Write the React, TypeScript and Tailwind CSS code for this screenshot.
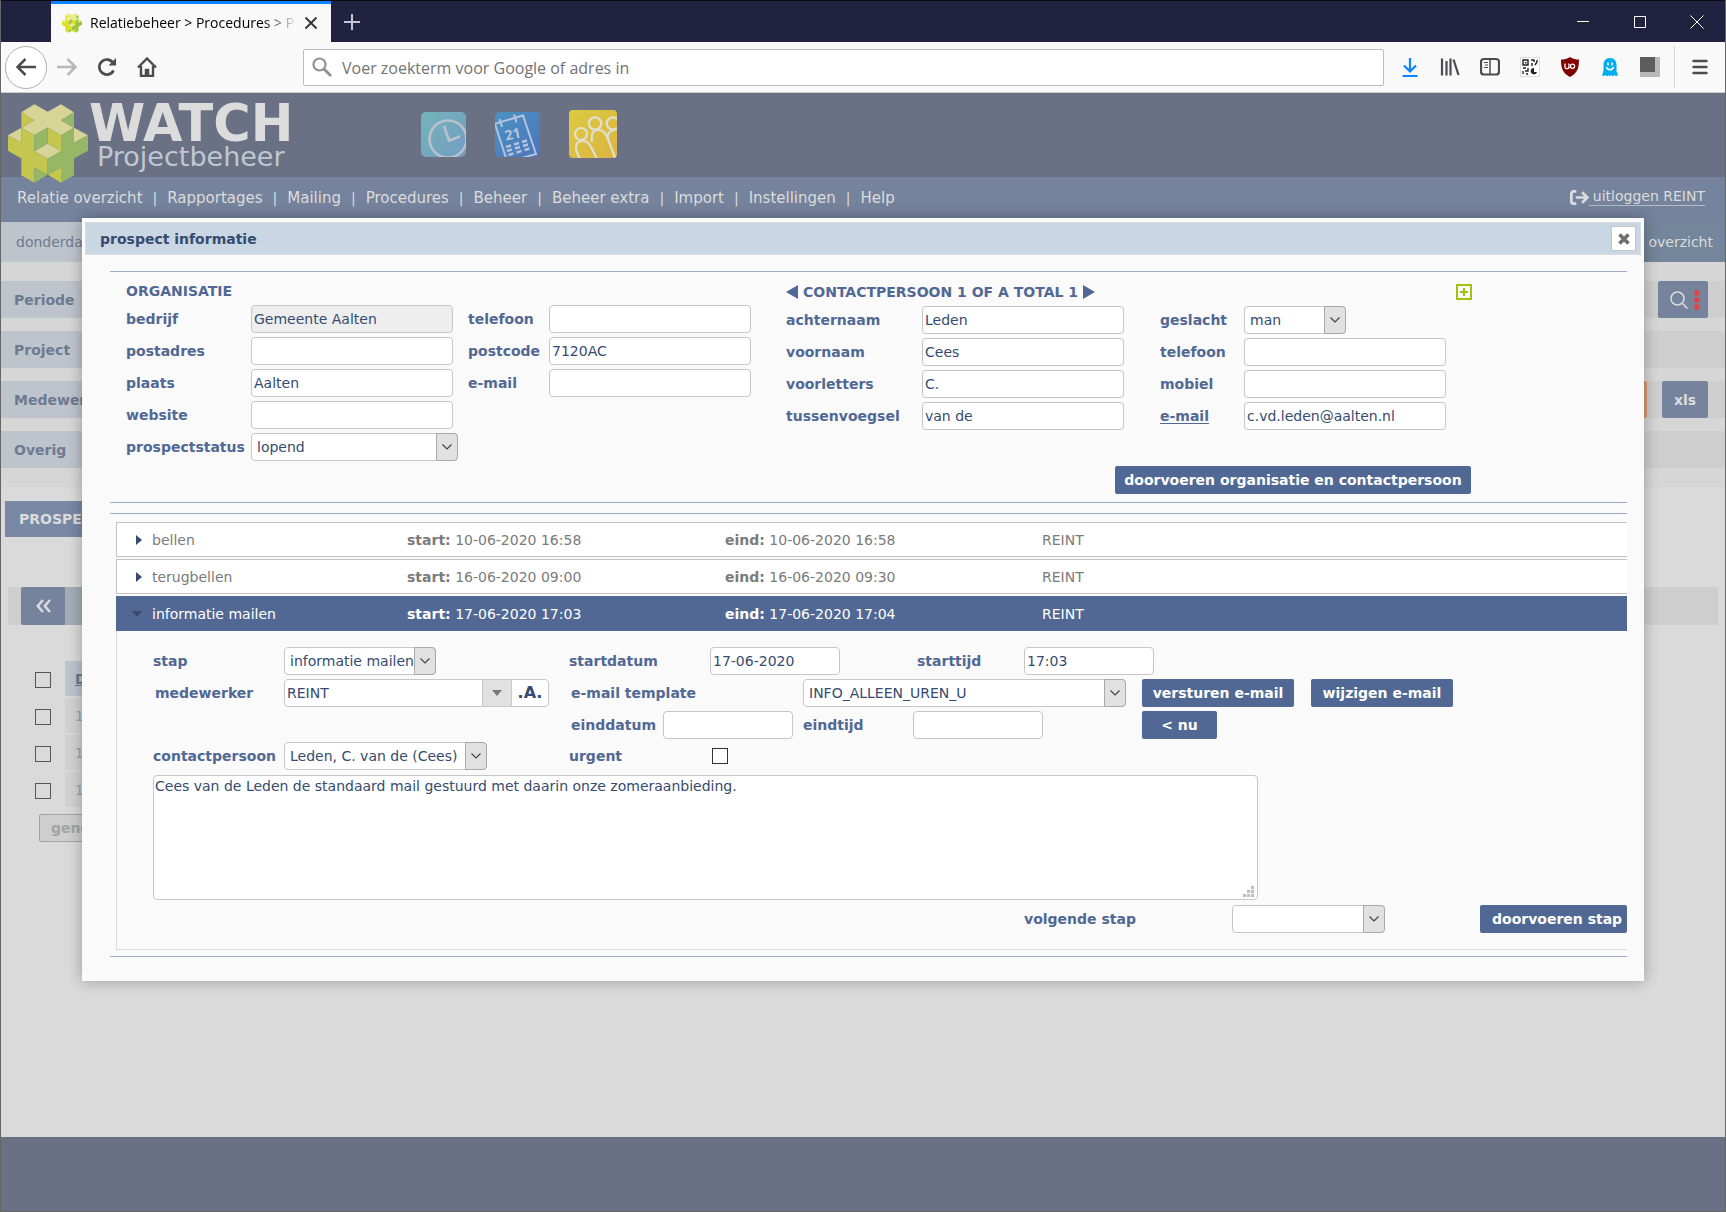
import React from 'react';
import clsx from 'clsx';

const LABEL = 'shrink-0 font-bold text-[#516894] whitespace-nowrap';
const FIELD = 'h-7 shrink-0 rounded border border-[#c6c6c6] text-[#364b6f] outline-none';
const BUTTON = 'h-7 shrink-0 rounded-xs bg-[#516894] font-bold text-white whitespace-nowrap';

const menu = ['Relatie overzicht', 'Rapportages', 'Mailing', 'Procedures', 'Beheer', 'Beheer extra', 'Import', 'Instellingen', 'Help'];
const filters = ['Periode', 'Project', 'Medewerker', 'Overig'];

interface FieldProps {
  id: string;
  label: string;
  labelWidth: string;
  value?: string;
  width?: string;
  readOnly?: boolean;
  link?: boolean;
}

const TextField = ({ id, label, labelWidth, value = '', width = 'w-[202px]', readOnly, link }: FieldProps) => (
  <div className="flex items-center">
    <label htmlFor={id} className={clsx(LABEL, labelWidth)}>
      {link ? <a href="#mail" className="underline decoration-1 underline-offset-2">{label}</a> : label}
    </label>
    <input id={id} type="text" defaultValue={value} readOnly={readOnly} className={clsx(FIELD, width, 'px-0.5', readOnly ? 'bg-[#eeeeee]' : 'bg-white')} />
  </div>
);

interface SelectProps {
  id: string;
  label?: string;
  labelWidth?: string;
  value: string;
  width: string;
}

const SelectField = ({ id, label, labelWidth, value, width }: SelectProps) => (
  <div className="flex items-center">
    {label && <label htmlFor={id} className={clsx(LABEL, labelWidth)}>{label}</label>}
    <div className={clsx('relative shrink-0', width)}>
      <select id={id} className={clsx(FIELD, 'w-full appearance-none bg-white pl-[5px]')}>
        <option>{value}</option>
      </select>
      <span className="pointer-events-none absolute inset-y-0 right-0 flex w-[22px] items-center justify-center rounded-r border border-[#a9a9a9] bg-[#e1e1e1]">
        <svg width="10" height="6" viewBox="0 0 10 6" fill="none" stroke="#444" strokeWidth="1.2"><path d="M.5.5 5 5 9.500.5" /></svg>
      </span>
    </div>
  </div>
);

const CubeLogo = ({ className, bright }: { className: string; bright?: boolean }) => {
  const [top, left, right] = bright ? ['#eeea8c', '#dce01f', '#9ac53a'] : ['#d6d497', '#c4c650', '#96b766'];
  return (
    <svg className={className} viewBox="24 42 240 236">
      <path fill={top} d="M64 66 103 42l40 23 40-23 39 24-39 24 39 23-39 22-40-23-40 23-39-22 39-23zM24 135l40-22v45zM264 135l-42-22v45zM103 183l40-23 40 23-40 23z" />
      <path fill={left} d="M64 66l39 24-39 23zM24 135l40 23v-45l39 22v48l40 23v48l-40-22v46l-39-23v-50l-40-23zM143 112l40 23v48l-40-23zM183 232l-40 22 40 24z" />
      <path fill={right} d="M222 66l-39 24 39 23zM264 135l-42 23v-45l-39 22v48l-40 23v48l40-22v46l39-23v-50l42-23zM143 112l-40 23v48l40-23zM103 232l40 22-40 24z" />
    </svg>
  );
};

const TitleBar = () => (
  <div className="flex h-[42px] items-stretch border-t border-[#0b0b14] bg-[#20223f]">
    <div className="ml-[50px] flex w-[280px] items-center border-t-[3px] border-[#0a84ff] bg-[#f9f9f9] pl-[11px]">
      <CubeLogo className="mr-2 h-5 w-5 shrink-0" bright />
      <span className="w-[208px] overflow-hidden bg-gradient-to-r from-black from-80% to-[#f9f9f9] to-100% bg-clip-text font-['Open_Sans',sans-serif] text-[14px] whitespace-nowrap text-transparent">
        Relatiebeheer &gt; Procedures &gt; P
      </span>
      <button aria-label="Tabblad sluiten" className="mr-3 ml-1.5 shrink-0">
        <svg width="14" height="14" viewBox="0 0 14 14" stroke="#333" strokeWidth="1.8"><path d="M1.500 1.500l11 11M12.500 1.500l-11 11" /></svg>
      </button>
    </div>
    <button aria-label="Nieuw tabblad" className="ml-3">
      <svg width="18" height="18" viewBox="0 0 18 18" stroke="#c6c7d2" strokeWidth="2"><path d="M9 1v16M1 9h16" /></svg>
    </button>
    <div className="ml-auto flex">
      <button aria-label="Minimaliseren" className="flex w-[57px] items-center justify-center">
        <svg width="12" height="12" viewBox="0 0 12 12" stroke="#fff"><path d="M0 5.500h12" /></svg>
      </button>
      <button aria-label="Maximaliseren" className="flex w-[57px] items-center justify-center">
        <svg width="12" height="12" viewBox="0 0 12 12" stroke="#fff" fill="none"><path d="M.5.5h11v11H.5z" /></svg>
      </button>
      <button aria-label="Sluiten" className="flex w-[57px] items-center justify-center">
        <svg width="14" height="14" viewBox="0 0 14 14" stroke="#fff"><path d="M.5.5l13 13M13.500.5l-13 13" /></svg>
      </button>
    </div>
  </div>
);

const toolbarIcons = [
  {
    name: 'Downloads',
    art: <path d="M10 1v13M4 8.500l6 6 6-6M2.500 19h15" fill="none" stroke="#0a84ff" strokeWidth="2.200" />,
  },
  {
    name: 'Bibliotheek',
    art: <path d="M2 1.500v17M6.500 4v14.500M10.500 1.500v17M13.500 2.500l5 15.500" fill="none" stroke="#4c4c4f" strokeWidth="2.200" />,
  },
  {
    name: 'Zijbalk',
    art: (
      <g fill="none" stroke="#4c4c4f">
        <rect x="1" y="2" width="18" height="15.500" rx="3" strokeWidth="2.200" />
        <path d="M10 2v16" strokeWidth="1.500" />
        <path d="M4 5.500h4M5 8h3M4 10.500h4" />
      </g>
    ),
  },
  {
    name: 'QR-code',
    art: (
      <g>
        <rect x=".5" y=".5" width="19" height="19" fill="#fff" stroke="#ddd" />
        <path d="M3 3h5v5H3zM11 3h3v2M17 3v2l-2 3M12 6v3M3 11h3M8 11v3H5M3 14v3M6 17h2" fill="none" stroke="#222" strokeWidth="1.400" />
        <path d="M5 5h1.500v1.500H5zM14 11a3.200 3.200 0 1 0 3 4h-3z" fill="#222" />
      </g>
    ),
  },
  {
    name: 'uBlock Origin',
    art: (
      <g>
        <path d="M10 0c3 2 6 2.500 9 2.500C19 12 17 16 10 20 3 16 1 12 1 2.500 4 2.500 7 2 10 0z" fill="#800000" />
        <path d="M5 6.500v3.200a1.900 1.900 0 0 0 4 0V6.500v4.700" fill="none" stroke="#fff" strokeWidth="1.300" />
        <circle cx="12.500" cy="9.200" r="2.100" fill="none" stroke="#fff" strokeWidth="1.300" />
      </g>
    ),
  },
  {
    name: 'Ghostery',
    art: (
      <g>
        <path d="M10 1C5.500 1 3.500 4 3.500 8v6L2 18.500c1.500.5 2.500.5 3.500-.5 1 1.500 2.500 1.500 3.300 0 .8 1.500 1.700 1.500 2.500 0 .8 1.500 2.300 1.500 3.200 0 1 1 2 1 3.500.5L16.500 14V8c0-4-2-7-6.500-7z" fill="#00aef0" />
        <path d="M8 5.500v3M12 5.500v3M6.500 10c1 3.500 6 3.500 7 0" fill="none" stroke="#fff" strokeWidth="1.500" />
      </g>
    ),
  },
  {
    name: 'Extensie',
    art: (
      <g>
        <path d="M0 0h20v20H0z" fill="#b9b9b9" />
        <path d="M0 0h15v15H0z" fill="#5d5d5d" />
      </g>
    ),
  },
];

const Toolbar = () => (
  <div className="flex h-[51px] items-center border-b border-[#cccccc] bg-[#f9f9f9] pl-1">
    <button aria-label="Terug" className="flex h-[43px] w-[42px] items-center justify-center rounded-full border border-[#b1b1b1] bg-white">
      <svg width="20" height="18" viewBox="0 0 20 18" fill="none" stroke="#4c4c4f" strokeWidth="2.500"><path d="M20 9H2M9.500 1 1.500 9l8 8" /></svg>
    </button>
    <button aria-label="Vooruit" className="flex w-10 justify-center">
      <svg width="20" height="18" viewBox="0 0 20 18" fill="none" stroke="#b8b8b8" strokeWidth="2.500"><path d="M0 9h18M10.500 1l8 8-8 8" /></svg>
    </button>
    <button aria-label="Vernieuwen" className="flex w-10 justify-center">
      <svg width="20" height="20" viewBox="0 0 20 20" fill="none" stroke="#4c4c4f" strokeWidth="2.700"><path d="M16.500 13.500a7.500 7.500 0 1 1-.3-7.500" /><path d="M19 1v7.500h-7.500z" fill="#4c4c4f" stroke="none" /></svg>
    </button>
    <button aria-label="Startpagina" className="flex w-10 justify-center">
      <svg width="20" height="20" viewBox="0 0 20 20" fill="none" stroke="#4c4c4f" strokeWidth="2.400"><path d="M1 10.500 10 1.500l9 9" /><path d="M4 9v10h12V9" /><path d="M8.500 18v-5.500h3V18z" fill="#4c4c4f" strokeWidth="1.500" /></svg>
    </button>
    <div className="ml-[136px] flex h-[37px] flex-1 items-center rounded-xs border border-[#bcbcbc] bg-white pl-2">
      <svg width="20" height="20" viewBox="0 0 20 20" fill="none" stroke="#909090"><circle cx="7.500" cy="7.500" r="6" strokeWidth="2.200" /><path d="M12 12l7 7" strokeWidth="2.800" /></svg>
      <input aria-label="Zoeken" type="text" placeholder="Voer zoekterm voor Google of adres in" className="ml-2.5 flex-1 pt-0.5 font-['Open_Sans',sans-serif] text-[16px] outline-none placeholder:text-[#737373]" />
    </div>
    <div className="ml-1.5 flex">
      {toolbarIcons.map((icon) => (
        <button key={icon.name} aria-label={icon.name} className="flex w-10 justify-center">
          <svg width="20" height="20" viewBox="0 0 20 20">{icon.art}</svg>
        </button>
      ))}
    </div>
    <div className="ml-1 flex h-[42px] w-[51px] items-center justify-center border-l border-[#d6d6d6]">
      <button aria-label="Menu">
        <svg width="16" height="16" viewBox="0 0 16 16" stroke="#4c4c4f" strokeWidth="2.400" strokeLinecap="round"><path d="M1.500 2h13M1.500 8h13M1.500 14h13" /></svg>
      </button>
    </div>
  </div>
);

const AppIcons = () => (
  <div className="ml-[132px] flex items-center gap-[29px] pt-[17px]">
    <a href="#uren" aria-label="Uren">
      <svg width="45" height="45" viewBox="0 0 45 45">
        <defs>
          <linearGradient id="teal" x1="0" y1="0" x2="1" y2="1"><stop offset="0" stopColor="#74b3b8" /><stop offset="1" stopColor="#739dc4" /></linearGradient>
          <clipPath id="tile"><rect width="45" height="45" rx="5" /></clipPath>
        </defs>
        <g clipPath="url(#tile)">
          <rect width="45" height="45" fill="url(#teal)" />
          <circle cx="27" cy="27" r="18.500" fill="none" stroke="#b9c1cd" strokeWidth="2.600" />
          <path d="M23 14l5 14.500 11-4" fill="none" stroke="#b9c1cd" strokeWidth="2.600" />
        </g>
      </svg>
    </a>
    <a href="#planning" aria-label="Planning">
      <svg width="45" height="45" viewBox="0 0 45 45">
        <defs><linearGradient id="blue" x1="0" y1="0" x2="1" y2="1"><stop offset="0" stopColor="#4b93c0" /><stop offset="1" stopColor="#4d74bd" /></linearGradient></defs>
        <g clipPath="url(#tile)">
          <rect width="45" height="45" fill="url(#blue)" />
          <g fill="none" stroke="#b4c3dc" strokeWidth="2">
            <path d="M-1 12 28 3.500 41 42l-29 8M0 12l11 34M4.500 7l2.500 8M19 2.500l2.500 8" />
            <path d="M11 35l5-1.500M12 39l5-1.500M13.500 43l5-1.500M19 32.500l5-1.500M20 36.500l5-1.500M21.500 40.500l5-1.500M27 30l5-1.500M28 34l5-1.500M29.500 38l5-1.500" strokeWidth="2.400" />
          </g>
          <text x="11" y="29" transform="rotate(-13 10 29)" fill="#b4c3dc" fontSize="14" fontWeight="bold" fontFamily="Open Sans, sans-serif">21</text>
        </g>
      </svg>
    </a>
    <a href="#relaties" aria-label="Relaties">
      <svg width="48" height="48" viewBox="0 0 48 48">
        <defs>
          <linearGradient id="gold" x1="0" y1="0" x2="1" y2="1"><stop offset="0" stopColor="#dccb40" /><stop offset="1" stopColor="#dcb442" /></linearGradient>
          <clipPath id="bigTile"><rect width="48" height="48" rx="4" /></clipPath>
        </defs>
        <g clipPath="url(#bigTile)">
          <rect width="48" height="48" fill="url(#gold)" />
          <g fill="none" stroke="#e1dfd4" strokeWidth="2.200">
            <circle cx="12" cy="24" r="6" />
            <circle cx="26" cy="13.500" r="6.200" />
            <circle cx="44" cy="13.500" r="6.200" />
            <path d="M11 49C4 36 7 31 14 31c5 0 7 3 9 8l5 10M23 32c-1-8 1-12 6-12 5 0 7 2 10 9l8 21M39 29c-1-5 1-8 6-9" />
          </g>
        </g>
      </svg>
    </a>
  </div>
);

// Everything behind the dialog, in its dimmed colours
const PageHeader = () => (
  <header className="text-[#dcdcdc]">
    <div className="flex h-[84px] items-start bg-[#6a7185] pl-[7px]">
      <CubeLogo className="relative z-10 mt-[11px] h-[79px] w-20 shrink-0" />
      <div className="ml-px w-[200px] pt-2">
        <div className="text-[51px] leading-[46px] font-bold">WATCH</div>
        <div className="pl-2 text-[27px] leading-[20px] text-[#bfc8d1]">Projectbeheer</div>
      </div>
      <AppIcons />
    </div>
    <nav className="flex h-[45px] items-start justify-between bg-[#75839d] pt-[11px] pr-5 pl-4">
      <ul className="flex text-[15px]">
        {menu.map((item, idx) => (
          <li key={item} className="whitespace-nowrap">
            {idx > 0 && <span className="mx-2.5 text-[14px]">|</span>}
            <a href="#menu">{item}</a>
          </li>
        ))}
      </ul>
      <a href="#uitloggen" className="flex items-center">
        <svg width="19" height="15" viewBox="0 0 18 14" fill="none" stroke="#dcdcdc" strokeWidth="2.600"><path d="M6 1.300H3.300a2 2 0 0 0-2 2v7.400a2 2 0 0 0 2 2H6M5.500 7H16M11.500 2l5 5-5 5" /></svg>
        <span className="border-b border-[#b5bdca] pl-1 leading-[17px]">uitloggen REINT</span>
      </a>
    </nav>
  </header>
);

const PageBackground = () => (
  <main className="flex flex-1 flex-col bg-[#dadada] text-[#6d7a92]">
    <div className="flex h-10 items-center justify-between bg-[#bec4cc] pl-[15px]">
      <span>donderdag</span>
      <span className="flex h-10 w-[200px] items-center justify-end bg-[#74869b] pr-3 text-[#dcdcdc]">overzicht</span>
    </div>
    <div className="flex flex-col gap-[13px] bg-[#d6d6d6] py-[19px]">
      {filters.map((name) => (
        <div key={name} className="flex h-[37px] items-center justify-between bg-[#cecece] pr-[17px]">
          <span className="flex h-full w-[200px] items-center bg-[#bec4cc] pl-[13px] font-bold">{name}</span>
          {name === 'Periode' && (
            <button aria-label="Zoeken" className="flex h-full w-[50px] items-center justify-center gap-1.5 rounded-xs bg-[#75839d] pl-1">
              <svg width="18" height="18" viewBox="0 0 18 18" fill="none" stroke="#dcdcdc" strokeWidth="1.500"><circle cx="7.500" cy="7.500" r="6.500" /><path d="M12.500 12.500l5 5" /></svg>
              <svg width="6" height="20" viewBox="0 0 6 20" fill="#d9484c"><circle cx="3" cy="3" r="2.900" /><circle cx="3" cy="10" r="2.900" /><circle cx="3" cy="17" r="2.900" /></svg>
            </button>
          )}
          {name === 'Medewerker' && (
            <span className="flex h-full gap-[15px]">
              <button aria-label="Filter" className="w-[50px] rounded-xs bg-[#d99a70]" />
              <button className="w-[46px] rounded-xs bg-[#75839d] font-bold text-[#dcdcdc]">xls</button>
            </span>
          )}
        </div>
      ))}
    </div>
    <h2 className="mt-3.5 ml-1 flex h-9 w-[200px] items-center bg-[#7888a5] pl-3.5 font-bold text-[#dcdcdc]">PROSPECTS</h2>
    <div className="mx-[7px] mt-[50px] mb-9 flex h-[38px] bg-[#cecece] pl-[13px]">
      <button aria-label="Vorige" className="flex w-11 items-center justify-center rounded-l-xs bg-[#75839d]">
        <svg width="15" height="14" viewBox="0 0 15 14" fill="none" stroke="#dcdcdc" strokeWidth="2.500"><path d="M7 1 1.800 7 7 13M14 1 8.800 7 14 13" /></svg>
      </button>
      <span className="w-[100px] bg-[#a3acb7]" />
    </div>
    <table className="ml-[34px] w-[200px] table-fixed border-separate border-spacing-0 text-[#9aa3b3]">
      <tbody>
        {['Datum', '17-06', '16-06', '10-06'].map((cell, idx) => (
          <tr key={cell} className="h-[37px]">
            <td className="w-[30px] p-0">
              <input type="checkbox" aria-label={cell} className="block h-4 w-4 appearance-none border border-[#555]" />
            </td>
            <td className={clsx('border-b-2 border-[#dadada] py-0 pl-2.5', idx === 0 ? 'bg-[#bdc4ce] font-bold text-[#6d7a92] underline' : 'bg-[#d2d2d2]')}>{cell}</td>
          </tr>
        ))}
      </tbody>
    </table>
    <button className="mt-[5px] ml-[38px] h-7 w-[150px] rounded-xs border border-[#a3a3a3] bg-[#cecece] pl-[11px] text-left font-bold text-[#a3a3a3]">genereren</button>
  </main>
);

const OrganisatieForm = () => (
  <div className="flex h-[231px] items-start border-t border-[#9dadc4] pt-[11px] pl-4">
    <div className="w-[660px] shrink-0">
      <h3 className="mb-1.5 leading-4 font-bold text-[#516894]">ORGANISATIE</h3>
      <div className="flex">
        <div className="flex w-[342px] flex-col gap-1">
          <TextField id="bedrijf" label="bedrijf" labelWidth="w-[125px]" value="Gemeente Aalten" readOnly />
          <TextField id="postadres" label="postadres" labelWidth="w-[125px]" />
          <TextField id="plaats" label="plaats" labelWidth="w-[125px]" value="Aalten" />
          <TextField id="website" label="website" labelWidth="w-[125px]" />
          <SelectField id="status" label="prospectstatus" labelWidth="w-[125px]" value="lopend" width="w-[207px]" />
        </div>
        <div className="flex flex-col gap-1">
          <TextField id="tel" label="telefoon" labelWidth="w-[81px]" />
          <TextField id="postcode" label="postcode" labelWidth="w-[81px]" value="7120AC" />
          <TextField id="mail" label="e-mail" labelWidth="w-[81px]" />
        </div>
      </div>
    </div>
    <div className="w-[686px] shrink-0 pt-px">
      <div className="mb-1.5 flex h-4 items-center justify-between font-bold text-[#516894]">
        <div className="flex items-center gap-[5px]">
          <button aria-label="Vorige contactpersoon"><svg className="block" width="12" height="14" viewBox="0 0 12 14" fill="#516894"><path d="M12 0v14L0 7z" /></svg></button>
          <h3>CONTACTPERSOON 1 OF A TOTAL 1</h3>
          <button aria-label="Volgende contactpersoon"><svg className="block" width="12" height="14" viewBox="0 0 12 14" fill="#516894"><path d="M0 0v14l12-7z" /></svg></button>
        </div>
        <button aria-label="Contactpersoon toevoegen">
          <svg className="block" width="16" height="16" viewBox="0 0 16 16" fill="none" stroke="#a4c112" strokeWidth="2"><path d="M1 1h14v14H1zM8 4v8M4 8h8" /></svg>
        </button>
      </div>
      <div className="flex">
        <div className="flex w-[374px] flex-col gap-1">
          <TextField id="achternaam" label="achternaam" labelWidth="w-[136px]" value="Leden" />
          <TextField id="voornaam" label="voornaam" labelWidth="w-[136px]" value="Cees" />
          <TextField id="voorletters" label="voorletters" labelWidth="w-[136px]" value="C." />
          <TextField id="tussenvoegsel" label="tussenvoegsel" labelWidth="w-[136px]" value="van de" />
        </div>
        <div className="flex flex-col gap-1">
          <SelectField id="geslacht" label="geslacht" labelWidth="w-[84px]" value="man" width="w-[102px]" />
          <TextField id="cp-tel" label="telefoon" labelWidth="w-[84px]" />
          <TextField id="cp-mobiel" label="mobiel" labelWidth="w-[84px]" />
          <TextField id="cp-mail" label="e-mail" labelWidth="w-[84px]" value="c.vd.leden@aalten.nl" link />
        </div>
      </div>
      <div className="mt-9 flex justify-end pr-px">
        <button className={clsx(BUTTON, 'w-[356px]')}>doorvoeren organisatie en contactpersoon</button>
      </div>
    </div>
  </div>
);

interface StepProps {
  name: string;
  start: string;
  end: string;
  active?: boolean;
}

const StepRow = ({ name, start, end, active }: StepProps) => (
  <button className={clsx('flex h-[35px] w-full items-center border-y border-l text-left', active ? 'border-[#516894] bg-[#516894] text-white' : 'border-[#c3c3c3] bg-white text-[#7b7b7b]')}>
    <span className="flex w-[35px] shrink-0 justify-center pl-1">
      {active
        ? <svg width="10" height="6" viewBox="0 0 10 6" fill="#3a4a6e"><path d="M0 0h10L5 6z" /></svg>
        : <svg className="ml-1" width="6" height="10" viewBox="0 0 6 10" fill="#364b6f"><path d="M0 0v10l6-5z" /></svg>}
    </span>
    <span className="w-[255px] shrink-0">{name}</span>
    <span className="w-[318px] shrink-0"><b>start:</b> {start}</span>
    <span className="w-[317px] shrink-0"><b>eind:</b> {end}</span>
    <span>REINT</span>
  </button>
);

const StepForm = () => (
  <div className="h-[319px] overflow-hidden border-b border-l border-[#dddddd] pt-4 pl-9">
    <div className="flex">
      <div className="w-[416px] shrink-0">
        <SelectField id="stap" label="stap" labelWidth="w-[131px]" value="informatie mailen" width="w-[152px]" />
      </div>
      <div className="w-[348px] shrink-0">
        <TextField id="startdatum" label="startdatum" labelWidth="w-[141px]" value="17-06-2020" width="w-[130px]" />
      </div>
      <TextField id="starttijd" label="starttijd" labelWidth="w-[107px]" value="17:03" width="w-[130px]" />
    </div>
    <div className="mt-1 flex items-center">
      <div className="flex w-[418px] shrink-0 items-center">
        <label htmlFor="medewerker" className={clsx(LABEL, 'w-[131px] pl-0.5')}>medewerker</label>
        <div className={clsx(FIELD, 'flex w-[265px] overflow-hidden bg-white')}>
          <input id="medewerker" type="text" defaultValue="REINT" className="w-[197px] px-0.5 outline-none" />
          <button aria-label="Medewerker kiezen" className="flex w-[30px] items-center justify-center border-x border-[#c6c6c6] bg-[#e1e1e1]">
            <svg width="10" height="6" viewBox="0 0 10 6" fill="#777"><path d="M0 0h10L5 6z" /></svg>
          </button>
          <button className="flex-1 text-[16px] font-bold">.A.</button>
        </div>
      </div>
      <label htmlFor="template" className={clsx(LABEL, 'w-[232px]')}>e-mail template</label>
      <SelectField id="template" value="INFO_ALLEEN_UREN_U" width="w-[323px]" />
      <button className={clsx(BUTTON, 'ml-4 w-[152px]')}>versturen e-mail</button>
      <button className={clsx(BUTTON, 'ml-[17px] w-[142px]')}>wijzigen e-mail</button>
    </div>
    <div className="mt-1 flex pl-[418px]">
      <div className="w-[232px] shrink-0">
        <TextField id="einddatum" label="einddatum" labelWidth="w-[92px]" width="w-[130px]" />
      </div>
      <div className="w-[339px] shrink-0">
        <TextField id="eindtijd" label="eindtijd" labelWidth="w-[110px]" width="w-[130px]" />
      </div>
      <button className={clsx(BUTTON, 'w-[75px]')}>&lt; nu</button>
    </div>
    <div className="mt-[3px] flex items-center">
      <div className="w-[416px] shrink-0">
        <SelectField id="contact" label="contactpersoon" labelWidth="w-[131px]" value="Leden, C. van de (Cees)" width="w-[203px]" />
      </div>
      <label htmlFor="urgent" className={clsx(LABEL, 'w-[143px]')}>urgent</label>
      <input id="urgent" type="checkbox" className="h-4 w-4 appearance-none border border-[#333] bg-white" />
    </div>
    <div className="relative mt-[5px] w-[1105px]">
      <textarea
        aria-label="Notitie"
        className="block h-[125px] w-full resize-none rounded border border-[#c6c6c6] bg-white px-px text-[#364b6f] outline-none"
        defaultValue="Cees van de Leden de standaard mail gestuurd met daarin onze zomeraanbieding."
      />
      <svg className="pointer-events-none absolute right-1 bottom-[3px]" width="11" height="11" viewBox="0 0 11 11" fill="#bdbdbd">
        <path d="M8 0h3v3H8zM8 4h3v3H8zM4 4h3v3H4zM8 8h3v3H8zM4 8h3v3H4zM0 8h3v3H0z" />
      </svg>
    </div>
    <div className="mt-[5px] flex items-center justify-between">
      <div className="shrink-0 pl-[871px]">
        <SelectField id="volgende" label="volgende stap" labelWidth="w-[208px]" value="" width="w-[153px]" />
      </div>
      <button className={clsx(BUTTON, 'w-[147px] pl-3 text-left')}>doorvoeren stap</button>
    </div>
  </div>
);

const ProspectDialog = () => (
  <section role="dialog" aria-label="prospect informatie" className="absolute inset-x-[81px] top-[218px] z-20 bg-[#fafafa] px-[3px] pt-1 pb-6 shadow-[0_0_14px_rgba(0,0,0,0.3)]">
    <div className="flex h-[33px] items-center justify-between border border-[#dddddd] bg-[#c9d6e3] pr-1 pl-3.5">
      <h2 className="font-bold text-[#364b6f]">prospect informatie</h2>
      <button aria-label="Sluiten" className="flex h-[25px] w-[25px] items-center justify-center border border-[#c6c6c6] bg-white">
        <svg width="12" height="12" viewBox="0 0 12 12" stroke="#6f6f6f" strokeWidth="3.600"><path d="M1.500 1.500l9 9M10.500 1.500l-9 9" /></svg>
      </button>
    </div>
    <div className="mt-4 mr-3.5 ml-[25px]">
      <OrganisatieForm />
      <div className="mb-2.5 border-t border-[#9dadc4]" />
      <div className="border-y border-[#9dadc4] pt-2 pb-1.5 pl-1.5">
        <div className="flex flex-col gap-0.5">
          <StepRow name="bellen" start="10-06-2020 16:58" end="10-06-2020 16:58" />
          <StepRow name="terugbellen" start="16-06-2020 09:00" end="16-06-2020 09:30" />
          <StepRow name="informatie mailen" start="17-06-2020 17:03" end="17-06-2020 17:04" active />
        </div>
        <StepForm />
      </div>
    </div>
  </section>
);

const App: React.FC = () => (
  <div className="relative flex min-h-screen flex-col overflow-hidden border-x border-[#666666] font-['DejaVu_Sans',Verdana,sans-serif] text-[14px] leading-5">
    <TitleBar />
    <Toolbar />
    <PageHeader />
    <PageBackground />
    <footer className="h-[75px] border-b border-[#666666] bg-[#6a7185]" />
    <ProspectDialog />
  </div>
);

export default App;
